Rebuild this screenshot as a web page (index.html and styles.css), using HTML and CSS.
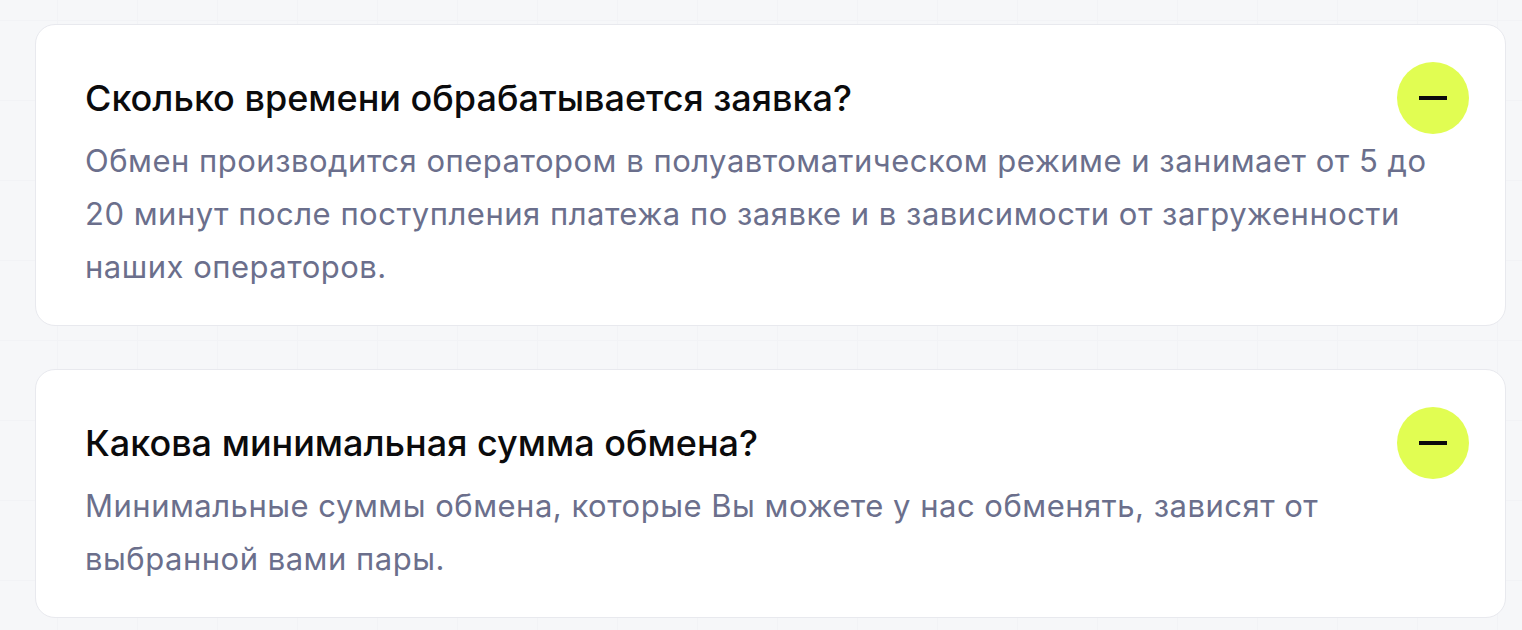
FILE: index.html
```html
<!DOCTYPE html>
<html lang="ru">
<head>
  <meta charset="UTF-8">
  <meta name="viewport" content="width=device-width, initial-scale=1.0">
  <title>FAQ</title>
  <link rel="stylesheet" href="styles.css">
</head>
<body>
  <div class="faq">
    <div class="faq-item open">
      <div class="faq-head">
        <h3 class="faq-question">Сколько времени обрабатывается заявка?</h3>
        <button class="faq-toggle" aria-label="Свернуть"><span class="minus"></span></button>
      </div>
      <p class="faq-answer">Обмен производится оператором в полуавтоматическом режиме и занимает от 5 до 20 минут после поступления платежа по заявке и в зависимости от загруженности наших операторов.</p>
    </div>

    <div class="faq-item open">
      <div class="faq-head">
        <h3 class="faq-question">Какова минимальная сумма обмена?</h3>
        <button class="faq-toggle" aria-label="Свернуть"><span class="minus"></span></button>
      </div>
      <p class="faq-answer">Минимальные суммы обмена, которые Вы можете у нас обменять, зависят от выбранной вами пары.</p>
    </div>
  </div>
</body>
</html>
```

FILE: styles.css
```css
html, body {
  margin: 0;
  padding: 0;
}

body {
  background-color: #f6f7f9;
  background-image:
    linear-gradient(to right, #f2f3f6 1px, transparent 1px),
    linear-gradient(to bottom, #f2f3f6 1px, transparent 1px);
  background-size: 80px 80px;
  background-position: 57px 20px;
  font-family: Inter, "Noto Sans", sans-serif;
  height: 630px;
  overflow: hidden;
}

.faq {
  display: flex;
  flex-direction: column;
  gap: 43px;
  width: 1471px;
  padding: 24px 0 0 35px;
}

.faq-item {
  background: #fff;
  border: 1px solid #e8e9ee;
  border-radius: 20px;
  padding: 37px 36px 32px 49px;
}

.faq-head {
  display: flex;
  align-items: center;
  justify-content: space-between;
  height: 72px;
}

.faq-question {
  margin: 0;
  font-size: 36px;
  font-weight: 500;
  color: #0b0b0c;
}

.faq-toggle {
  width: 72px;
  height: 72px;
  border: none;
  border-radius: 50%;
  background-color: #e1fd52;
  display: flex;
  align-items: center;
  justify-content: center;
  padding: 0;
  cursor: pointer;
}

.minus {
  display: block;
  width: 28px;
  height: 4px;
  background: #0b0b0c;
}

.faq-answer {
  margin: 0;
  padding-right: 25px;
  font-size: 31px;
  letter-spacing: 0.5px;
  line-height: 53px;
  color: #6b6f8c;
}
```
